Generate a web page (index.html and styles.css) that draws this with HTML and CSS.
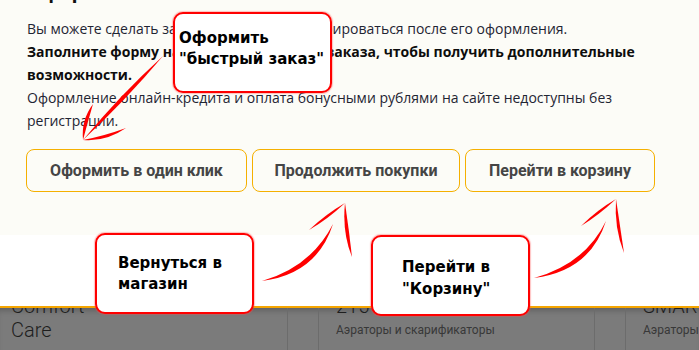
FILE: index.html
```html
<!DOCTYPE html>
<html lang="ru">
<head>
    <meta charset="UTF-8">
    <meta name="viewport" content="width=device-width, initial-scale=1.0">
    <title>Оформление заказа</title>
    <link rel="stylesheet" href="styles.css">
</head>
<body>
    <div class="screen">
        <div class="modal">
            <h2 class="modal-title">Оформление заказа</h2>
            <p class="note">Вы можете сделать заказ сейчас и зарегистрироваться после его оформления.</p>
            <p class="note note-bold">Заполните форму на этапе оформления заказа, чтобы получить дополнительные возможности.</p>
            <p class="note">Оформление онлайн-кредита и оплата бонусными рублями на сайте недоступны без регистрации.</p>

            <div class="actions">
                <button class="btn btn-quick">Оформить в один клик</button>
                <button class="btn btn-shop">Продолжить покупки</button>
                <button class="btn btn-cart">Перейти в корзину</button>
            </div>
        </div>

        <div class="modal-foot"></div>

        <div class="catalog">
            <div class="card">
                <div class="card-title">Comfort<br>Care</div>
            </div>
            <div class="card">
                <div class="card-title">215 Li</div>
                <div class="card-sub">Аэраторы и скарификаторы</div>
            </div>
            <div class="card">
                <div class="card-title">SMART</div>
                <div class="card-sub">Аэраторы и скарификаторы</div>
            </div>
        </div>

        <!-- annotations drawn over the screenshot -->
        <svg class="arrows" width="699" height="350" viewBox="0 0 699 350">
            <g fill="#f00">
                <!-- to "one click" button -->
                <path d="M163 56 Q125 101 83 140 Q120 95 163 56 Z"/>
                <path d="M83 140 Q81 120 93 104 Q88 121 83 140 Z"/>
                <path d="M83 140 Q106 142 126 128 Q104 136 83 140 Z"/>
                <!-- to "continue shopping" -->
                <path d="M262 281 Q317 274 333 224 Q311 267 262 281 Z"/>
                <path d="M345 203 Q328 219 309 230 Q326 214 345 203 Z"/>
                <path d="M345 203 Q342 232 352 257 Q349 230 345 203 Z"/>
                <!-- to cart -->
                <path d="M534 278 Q590 271 606 221 Q585 264 534 278 Z"/>
                <path d="M616 199 Q599 215 581 226 Q597 210 616 199 Z"/>
                <path d="M616 199 Q614 228 624 253 Q620 226 616 199 Z"/>
            </g>
        </svg>

        <div class="callout callout-quick">Оформить<br>"быстрый заказ"</div>
        <div class="callout callout-back">Вернуться в<br>магазин</div>
        <div class="callout callout-cart">Перейти в<br>"Корзину"</div>
    </div>
</body>
</html>
```

FILE: styles.css
```css
body {
    margin: 0;
    font-family: "Open Sans", Arial, sans-serif;
}
.screen {
    position: relative;
    width: 699px;
    height: 350px;
    overflow: hidden;
    background: #7b7b7b;
}
.modal {
    height: 235px;
    box-sizing: border-box;
    padding: 0 38px 0 26px;
    background: #fcfcf7;
    overflow: hidden;
}
.modal-title {
    margin: -21px 0 0 1px;
    font-size: 20px;
    line-height: 24px;
    color: #111;
}
.note {
    margin: 0 0 0 1px;
    font-size: 14px;
    line-height: 23px;
    color: #1f2533;
}
.modal-title + .note {
    margin-top: 14px;
}
.note-bold {
    font-weight: bold;
    color: #0d0d0d;
}
.actions {
    display: flex;
    gap: 5px;
    margin-top: 17px;
}
.btn {
    flex: 0 0 auto;
    height: 43px;
    padding: 0;
    border: 1px solid #f5b000;
    border-radius: 8px;
    background: transparent;
    font-family: Roboto, Arial, sans-serif;
    font-size: 16px;
    font-weight: bold;
    color: #454545;
    white-space: nowrap;
}
.btn-quick {
    width: 221px;
}
.btn-shop {
    width: 208px;
}
.btn-cart {
    width: 190px;
}
.modal-foot {
    height: 71px;
    background: #fff;
}
.catalog {
    display: flex;
    gap: 30px;
    height: 42px;
    border-top: 2px solid #f5a500;
    box-shadow: inset 0 6px 6px -4px rgba(0, 0, 0, 0.25);
    overflow: hidden;
}
.card {
    flex: 0 0 auto;
    padding: 0 17px;
    border-left: 1px solid #6c6c6c;
    border-right: 1px solid #6c6c6c;
}
.card:first-child {
    width: 259px;
    padding-left: 11px;
    border-left: none;
}
.card:nth-child(2) {
    width: 241px;
}
.card:last-child {
    width: 300px;
    padding-left: 17px;
    border-right: none;
}
.card-title {
    margin-top: -14px;
    font-family: Roboto, Arial, sans-serif;
    font-size: 20px;
    font-weight: 300;
    line-height: 24px;
    color: #1e1e1e;
}
.card-sub {
    margin-top: 4px;
    font-family: Roboto, Arial, sans-serif;
    font-size: 12px;
    line-height: 16px;
    color: #383838;
    white-space: nowrap;
}
.arrows {
    position: absolute;
    top: 0;
    left: 0;
    pointer-events: none;
}
.callout {
    position: absolute;
    box-sizing: border-box;
    width: 159px;
    height: 81px;
    border: 2px solid #f00;
    border-radius: 10px;
    background: #fff;
    box-shadow: 0 0 1px 1px rgba(255, 80, 80, 0.35);
    font-family: "DejaVu Sans", Verdana, sans-serif;
    font-size: 15px;
    font-weight: bold;
    line-height: 21px;
    color: #000;
    white-space: nowrap;
}
.callout-quick {
    left: 173px;
    top: 12px;
    padding: 14px 0 0 4px;
}
.callout-back {
    left: 95px;
    top: 233px;
    padding: 18px 0 0 21px;
}
.callout-cart {
    left: 371px;
    top: 235px;
    padding: 19px 0 0 29px;
    line-height: 22px;
}
```
